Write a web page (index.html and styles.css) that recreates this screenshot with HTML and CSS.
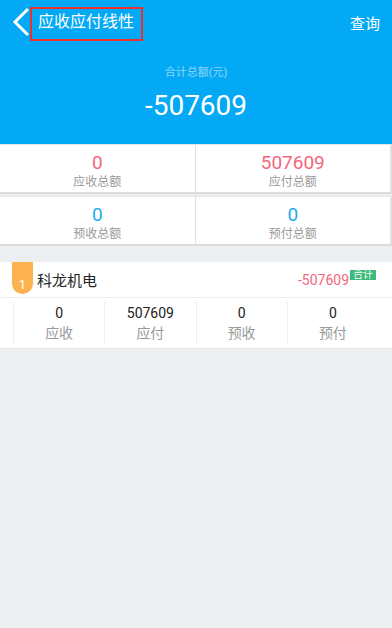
FILE: index.html
```html
<!DOCTYPE html>
<html lang="zh-CN">
<head>
    <meta charset="UTF-8">
    <title>应收应付线性</title>
    <link rel="stylesheet" href="styles.css">
</head>
<body>

    <header class="top">
        <div class="bar">
            <a class="back" href="#">
                <svg width="18" height="48" viewBox="0 0 18 48">
                    <polyline points="16,9 3,22 16,35" fill="none" stroke="#fff" stroke-width="3" stroke-linejoin="miter"/>
                </svg>
            </a>
            <h1 class="title">应收应付线性</h1>
            <span class="query">查询</span>
        </div>
        <div class="total">
            <p class="total-label">合计总额(元)</p>
            <p class="total-value">-507609</p>
        </div>
    </header>

    <section class="summary">
        <div class="summary-row">
            <div class="cell">
                <p class="num red">0</p>
                <p class="label">应收总额</p>
            </div>
            <div class="cell">
                <p class="num red">507609</p>
                <p class="label">应付总额</p>
            </div>
        </div>
        <div class="summary-row">
            <div class="cell">
                <p class="num blue">0</p>
                <p class="label">预收总额</p>
            </div>
            <div class="cell">
                <p class="num blue">0</p>
                <p class="label">预付总额</p>
            </div>
        </div>
    </section>

    <ul class="list">
        <li class="item">
            <div class="item-head">
                <span class="rank">1</span>
                <span class="name">科龙机电</span>
                <span class="amount">-507609<em class="tag">合计</em></span>
            </div>
            <div class="item-cols">
                <div class="col">
                    <p class="col-num">0</p>
                    <p class="col-label">应收</p>
                </div>
                <div class="col">
                    <p class="col-num">507609</p>
                    <p class="col-label">应付</p>
                </div>
                <div class="col">
                    <p class="col-num">0</p>
                    <p class="col-label">预收</p>
                </div>
                <div class="col">
                    <p class="col-num">0</p>
                    <p class="col-label">预付</p>
                </div>
            </div>
        </li>
    </ul>

</body>
</html>
```

FILE: styles.css
```css
body {
    font-family: Roboto, "Noto Sans CJK SC", sans-serif;
    margin: 0;
    padding: 0;
    background-color: #eceff1;
    color: #333;
}
p {
    margin: 0;
}
/* 顶部蓝色区域 */
.top {
    background-color: #03a9f4;
    color: #fff;
    height: 144px;
}
.bar {
    display: flex;
    align-items: center;
    height: 48px;
}
.back {
    display: block;
    width: 18px;
    height: 48px;
    margin-left: 12px;
}
.title {
    margin: 0;
    width: 103px;
    height: 30px;
    border: 2px solid #e8322f;
    padding: 0 0 0 6px;
    font-size: 16px;
    font-weight: normal;
    line-height: 26px;
}
.query {
    margin-left: auto;
    margin-right: 12px;
    margin-top: -4px;
    font-size: 15px;
}
.total {
    text-align: center;
}
.total-label {
    padding-top: 17px;
    font-size: 11px;
    line-height: 16px;
    color: rgba(255, 255, 255, 0.55);
}
.total-value {
    margin-top: 8px;
    font-size: 28px;
    line-height: 34px;
}
/* 汇总 */
.summary-row {
    display: grid;
    grid-template-columns: 1fr 1fr;
    gap: 1px;
    background-color: #e0e0e0;
    border-top: 1px solid #e6e6e6;
    border-bottom: 2px solid #dcdcdc;
    padding-right: 2px;
}
.summary-row + .summary-row {
    margin-top: 2px;
}
.cell {
    background-color: #fff;
    height: 47px;
    text-align: center;
    padding-top: 7px;
    box-sizing: border-box;
}
.num {
    font-size: 19px;
    line-height: 22px;
}
.red {
    color: #f4667c;
}
.blue {
    color: #1eaaf1;
}
.label {
    font-size: 12px;
    line-height: 17px;
    color: #999;
}
/* 列表 */
.list {
    list-style: none;
    margin: 16px 0 0;
    padding: 0;
}
.item {
    background-color: #fff;
    border-bottom: 1px solid #e4e4e4;
}
.item-head {
    display: flex;
    align-items: center;
    height: 35px;
    padding: 0 16px 0 12px;
    border-bottom: 1px solid #eee;
}
.rank {
    align-self: flex-start;
    width: 21px;
    height: 32px;
    background-color: #fbb24f;
    border-radius: 0 0 11px 11px;
    color: #fff;
    font-size: 13px;
    display: flex;
    align-items: flex-end;
    justify-content: center;
    padding-bottom: 2px;
    box-sizing: border-box;
}
.name {
    margin-left: 4px;
    font-size: 15px;
    color: #222;
}
.amount {
    margin-left: auto;
    display: flex;
    align-items: flex-start;
    font-size: 14px;
    line-height: 20px;
    color: #f4667c;
}
.tag {
    font-style: normal;
    font-size: 10px;
    line-height: 10px;
    margin: 0 0 0 1px;
    padding: 0 3px;
    background-color: #3dbb7c;
    color: #fff;
}
.item-cols {
    display: flex;
    padding: 0 14px 0 13px;
}
.col {
    flex: 1;
    text-align: center;
    border-left: 1px solid #eee;
    margin: 4px 0;
    padding: 1px 0 1px;
}
.col-num {
    font-size: 14px;
    line-height: 20px;
    color: #222;
}
.col-label {
    font-size: 14px;
    line-height: 20px;
    color: #999;
}
```
